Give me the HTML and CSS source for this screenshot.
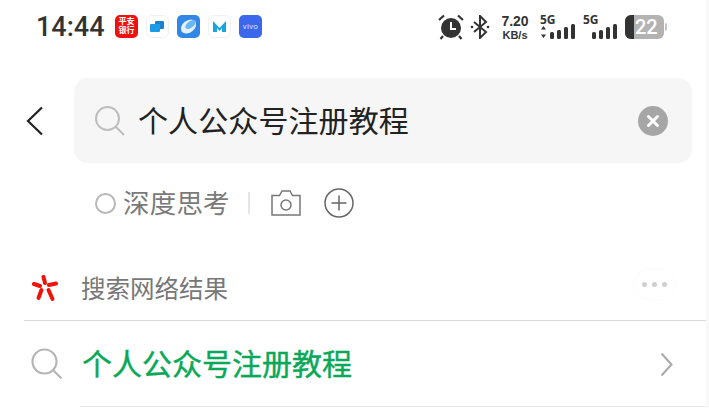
FILE: index.html
```html
<!DOCTYPE html>
<html lang="zh-CN">
<head>
    <meta charset="UTF-8">
    <meta name="viewport" content="width=device-width, initial-scale=1.0">
    <title>搜索</title>
    <link rel="stylesheet" href="styles.css">
</head>
<body>

    <div class="status-bar">
        <span class="clock">14:44</span>
        <div class="app-icons">
            <div class="app-icon app-bank"><span>平安</span><span>银行</span></div>
            <svg class="app-icon" viewBox="0 0 23 23">
                <rect x="0.5" y="0.5" width="22" height="22" rx="5" fill="#fff" stroke="#f0f0f0"/>
                <rect x="9" y="6" width="9" height="8" rx="1" fill="#1c7fd0"/>
                <rect x="4" y="9" width="10" height="8" rx="1" fill="#1e9be8"/>
            </svg>
            <svg class="app-icon" viewBox="0 0 23 23">
                <rect width="23" height="23" rx="5" fill="#3286e6"/>
                <ellipse cx="11.5" cy="11.5" rx="8.5" ry="6" transform="rotate(-38 11.5 11.5)" fill="#e3f1fc"/>
                <ellipse cx="13.5" cy="9.5" rx="6" ry="3.2" transform="rotate(-38 13.5 9.5)" fill="#6db6f3"/>
            </svg>
            <svg class="app-icon" viewBox="0 0 23 23">
                <rect x="0.5" y="0.5" width="22" height="22" rx="5" fill="#fff" stroke="#f0f0f0"/>
                <path d="M5 17V6l6.500 7L18 6v11h-4v-4l-2.500 3L9 13v4z" fill="#18a5e0"/>
            </svg>
            <div class="app-icon app-vivo">vivo</div>
        </div>

        <div class="status-right">
            <svg class="alarm" viewBox="0 0 26 26">
                <circle cx="13" cy="14" r="10" fill="#333"/>
                <path d="M1 6l5-4.500M25 6l-5-4.500M5 22l-2.500 3M21 22l2.500 3" stroke="#333" stroke-width="2.200" fill="none"/>
                <path d="M13 8v7h5" stroke="#fff" stroke-width="2" fill="none"/>
            </svg>
            <svg class="bluetooth" viewBox="0 0 20 24">
                <path d="M4 7l12 10-6 6V1l6 6L4 17" stroke="#333" stroke-width="2" fill="none"/>
                <circle cx="2" cy="12" r="1.300" fill="#333"/>
                <circle cx="18" cy="12" r="1.300" fill="#333"/>
            </svg>
            <div class="net-speed">
                <span class="speed-num">7.20</span>
                <span class="speed-unit">KB/s</span>
            </div>
            <div class="signal signal-first">
                <span class="signal-label">5G</span>
                <svg viewBox="0 0 37 16" class="signal-bars-wide">
                    <path d="M3.500 2L6 5.500H1zM3.500 14L6 10.500H1z" fill="#333"/>
                    <rect x="10" y="8" width="4" height="7" rx="1.500" fill="#333"/>
                    <rect x="17" y="6" width="4" height="9" rx="1.500" fill="#333"/>
                    <rect x="24" y="3" width="4" height="12" rx="1.500" fill="#333"/>
                    <rect x="31" y="0" width="4" height="15" rx="1.500" fill="#333"/>
                </svg>
            </div>
            <div class="signal">
                <span class="signal-label">5G</span>
                <svg viewBox="0 0 27 16" class="signal-bars">
                    <rect x="0" y="8" width="4" height="7" rx="1.500" fill="#333"/>
                    <rect x="7" y="6" width="4" height="9" rx="1.500" fill="#333"/>
                    <rect x="14" y="3" width="4" height="12" rx="1.500" fill="#333"/>
                    <rect x="21" y="0" width="4" height="15" rx="1.500" fill="#333"/>
                </svg>
            </div>
            <div class="battery">
                <div class="battery-body">
                    <div class="battery-used"></div>
                    <span class="battery-num">22</span>
                </div>
                <div class="battery-tip"></div>
            </div>
        </div>
    </div>

    <div class="search-row">
        <svg class="back" viewBox="0 0 18 30">
            <path d="M16 1.500L2 15l14 13.500" stroke="#222" stroke-width="2.200" fill="none"/>
        </svg>
        <div class="search-box">
            <svg class="search-icon" viewBox="0 0 30 30">
                <circle cx="12.500" cy="12.500" r="11.500" stroke="#bdbdbd" stroke-width="2" fill="none"/>
                <path d="M21 21l8 8" stroke="#bdbdbd" stroke-width="2" fill="none"/>
            </svg>
            <span class="search-text">个人公众号注册教程</span>
            <svg class="clear" viewBox="0 0 30 30">
                <circle cx="15" cy="15" r="15" fill="#a6a6a6"/>
                <path d="M10.500 10.500l9 9M19.500 10.500l-9 9" stroke="#fff" stroke-width="3" stroke-linecap="round"/>
            </svg>
        </div>
    </div>

    <div class="tools">
        <span class="radio"></span>
        <span class="tools-label">深度思考</span>
        <span class="tools-divider"></span>
        <svg class="camera" viewBox="0 0 30 26">
            <path d="M1 5.500h7.500L11 1h8l2.500 4.500H29V25H1z" stroke="#777" stroke-width="1.500" fill="none"/>
            <circle cx="15" cy="15" r="5" stroke="#777" stroke-width="1.500" fill="none"/>
        </svg>
        <svg class="plus" viewBox="0 0 30 30">
            <circle cx="15" cy="15" r="14" stroke="#666" stroke-width="1.500" fill="none"/>
            <path d="M15 7.500v15M7.500 15h15" stroke="#666" stroke-width="1.500"/>
        </svg>
    </div>

    <div class="results-head">
        <svg class="brand" viewBox="0 0 26 27">
            <g fill="none" stroke="#f01208" stroke-width="4" stroke-linecap="round">
                <path d="M11.500 2l1.500 6"/>
                <path d="M17 10l7-1.500"/>
                <path d="M16.500 15l4 9"/>
                <path d="M9.500 15l-3 8"/>
                <path d="M8 11l-6-2"/>
            </g>
        </svg>
        <span class="results-title">搜索网络结果</span>
        <div class="more-btn">
            <span class="more-dot"></span>
            <span class="more-dot"></span>
            <span class="more-dot"></span>
        </div>
    </div>

    <div class="result-row">
        <svg class="result-search" viewBox="0 0 32 32">
            <circle cx="13.500" cy="13.500" r="12" stroke="#b5b5b5" stroke-width="2.200" fill="none"/>
            <path d="M22.500 22.500l8 8" stroke="#b5b5b5" stroke-width="2.200" fill="none"/>
        </svg>
        <span class="result-text">个人公众号注册教程</span>
        <svg class="result-arrow" viewBox="0 0 13 25">
            <path d="M1.500 1.500L11.500 12.500l-10 11" stroke="#a8a8a8" stroke-width="2" fill="none"/>
        </svg>
    </div>

</body>
</html>
```

FILE: styles.css
```css
html, body {
    height: 100%;
}
body {
    margin: 0;
    background-color: #fff;
    font-family: Roboto, "Noto Sans CJK SC", sans-serif;
    overflow: hidden;
    width: 709px;
    height: 408px;
    border-right: 3px solid #f8f8f8;
    box-sizing: border-box;
}

/* status bar */
.status-bar {
    display: flex;
    align-items: center;
    height: 54px;
    padding-left: 36px;
}
.clock {
    font-size: 27px;
    font-weight: 500;
    color: #333;
    width: 79px;
}
.app-icons {
    display: flex;
    gap: 8px;
    margin-bottom: 2px;
}
.app-icon {
    width: 23px;
    height: 23px;
    display: block;
}
.app-bank {
    background-color: #ee1111;
    border-radius: 5px;
    color: #fff;
    font-size: 8px;
    font-weight: 700;
    line-height: 9px;
    display: flex;
    flex-direction: column;
    align-items: center;
    justify-content: center;
}
.app-vivo {
    background-color: #3b67ec;
    border-radius: 5px;
    color: #dbe5ff;
    font-size: 8px;
    line-height: 23px;
    text-align: center;
    letter-spacing: 0.3px;
}
.status-right {
    display: flex;
    align-items: center;
    margin-left: 176px;
}
.alarm {
    width: 26px;
    height: 26px;
}
.bluetooth {
    width: 20px;
    height: 24px;
    margin-left: 6px;
}
.net-speed {
    display: flex;
    flex-direction: column;
    align-items: center;
    width: 30px;
    margin-left: 10px;
    color: #333;
    font-family: "Liberation Sans", sans-serif;
    font-weight: 700;
}
.speed-num {
    font-size: 14px;
    line-height: 15px;
}
.speed-unit {
    font-size: 11px;
    line-height: 12px;
}
.signal {
    display: flex;
    flex-direction: column;
    width: 27px;
    margin-left: 6px;
    position: relative;
    height: 26px;
}
.signal-first {
    width: 37px;
    margin-left: 10px;
}
.signal-label {
    font-family: "Noto Sans", sans-serif;
    font-size: 12px;
    font-weight: 700;
    line-height: 12px;
    color: #333;
}
.signal-bars-wide {
    width: 37px;
    height: 16px;
    position: absolute;
    left: 0;
    bottom: 0;
}
.signal-bars {
    width: 27px;
    height: 16px;
    position: absolute;
    left: 9px;
    bottom: 0;
}
.battery {
    display: flex;
    align-items: center;
    margin-left: 15px;
}
.battery-body {
    display: flex;
    align-items: center;
    width: 39px;
    height: 24px;
    border-radius: 6px;
    background-color: #b3b3b3;
    overflow: hidden;
}
.battery-used {
    width: 9px;
    height: 24px;
    background-color: #333;
}
.battery-num {
    margin-left: 1px;
    font-size: 20px;
    font-weight: 500;
    color: #fff;
}
.battery-tip {
    width: 2px;
    height: 8px;
    margin-left: 1px;
    background-color: #c4c4c4;
    border-radius: 0 2px 2px 0;
}

/* search */
.search-row {
    display: flex;
    align-items: center;
    margin-top: 24px;
    padding-left: 26px;
}
.back {
    width: 18px;
    height: 30px;
    margin-right: 30px;
}
.search-box {
    display: flex;
    align-items: center;
    width: 618px;
    height: 85px;
    box-sizing: border-box;
    padding: 0 24px 0 21px;
    background-color: #f6f6f6;
    border-radius: 14px;
}
.search-icon {
    width: 30px;
    height: 30px;
    margin-right: 13px;
}
.search-text {
    flex: 1;
    font-size: 30px;
    letter-spacing: 0.1px;
    margin-bottom: 4px;
    color: #222;
}
.clear {
    width: 30px;
    height: 30px;
}

.tools {
    display: flex;
    align-items: center;
    height: 50px;
    margin-top: 15px;
    padding-left: 95px;
}
.radio {
    width: 17px;
    height: 17px;
    border: 2px solid #b8b8b8;
    border-radius: 50%;
    margin-right: 7px;
}
.tools-label {
    font-size: 26.500px;
    letter-spacing: 0.2px;
    margin-bottom: 4px;
    color: #7a7a7a;
}
.tools-divider {
    width: 2px;
    height: 22px;
    margin: 0 21px 0 18px;
    background-color: #e6e6e6;
}
.camera {
    width: 30px;
    height: 26px;
    margin-right: 23px;
}
.plus {
    width: 30px;
    height: 30px;
}

/* results */
.results-head {
    display: flex;
    align-items: center;
    margin: 29px 0 0 24px;
    height: 64px;
    box-sizing: border-box;
    padding: 0 32px 0 8px;
    border-bottom: 1px solid #d9d9d9;
}
.brand {
    width: 26px;
    height: 27px;
    margin-right: 23px;
}
.results-title {
    flex: 1;
    font-size: 24.500px;
    margin-bottom: 2px;
    color: #777;
}
.more-btn {
    display: flex;
    gap: 5px;
    margin-bottom: 8px;
    padding: 12px 7px;
    border-radius: 18px;
    box-shadow: 0 0 4px #f8f8f8;
}
.more-dot {
    width: 5px;
    height: 5px;
    border-radius: 50%;
    background-color: #cfcfcf;
}
.result-row {
    display: flex;
    align-items: center;
    margin: 0 0 0 31px;
    height: 86px;
    padding-right: 33px;
    box-sizing: border-box;
    position: relative;
}
.result-row::after {
    content: "";
    position: absolute;
    left: 49px;
    right: 0;
    bottom: 0;
    height: 1px;
    background-color: #e8e8e8;
}
.result-search {
    width: 32px;
    height: 32px;
    margin-right: 19px;
}
.result-text {
    flex: 1;
    font-size: 30px;
    margin-bottom: 4px;
    -webkit-text-stroke: 0.4px #0aa858;
    color: #0aa858;
}
.result-arrow {
    width: 13px;
    height: 25px;
}
```
